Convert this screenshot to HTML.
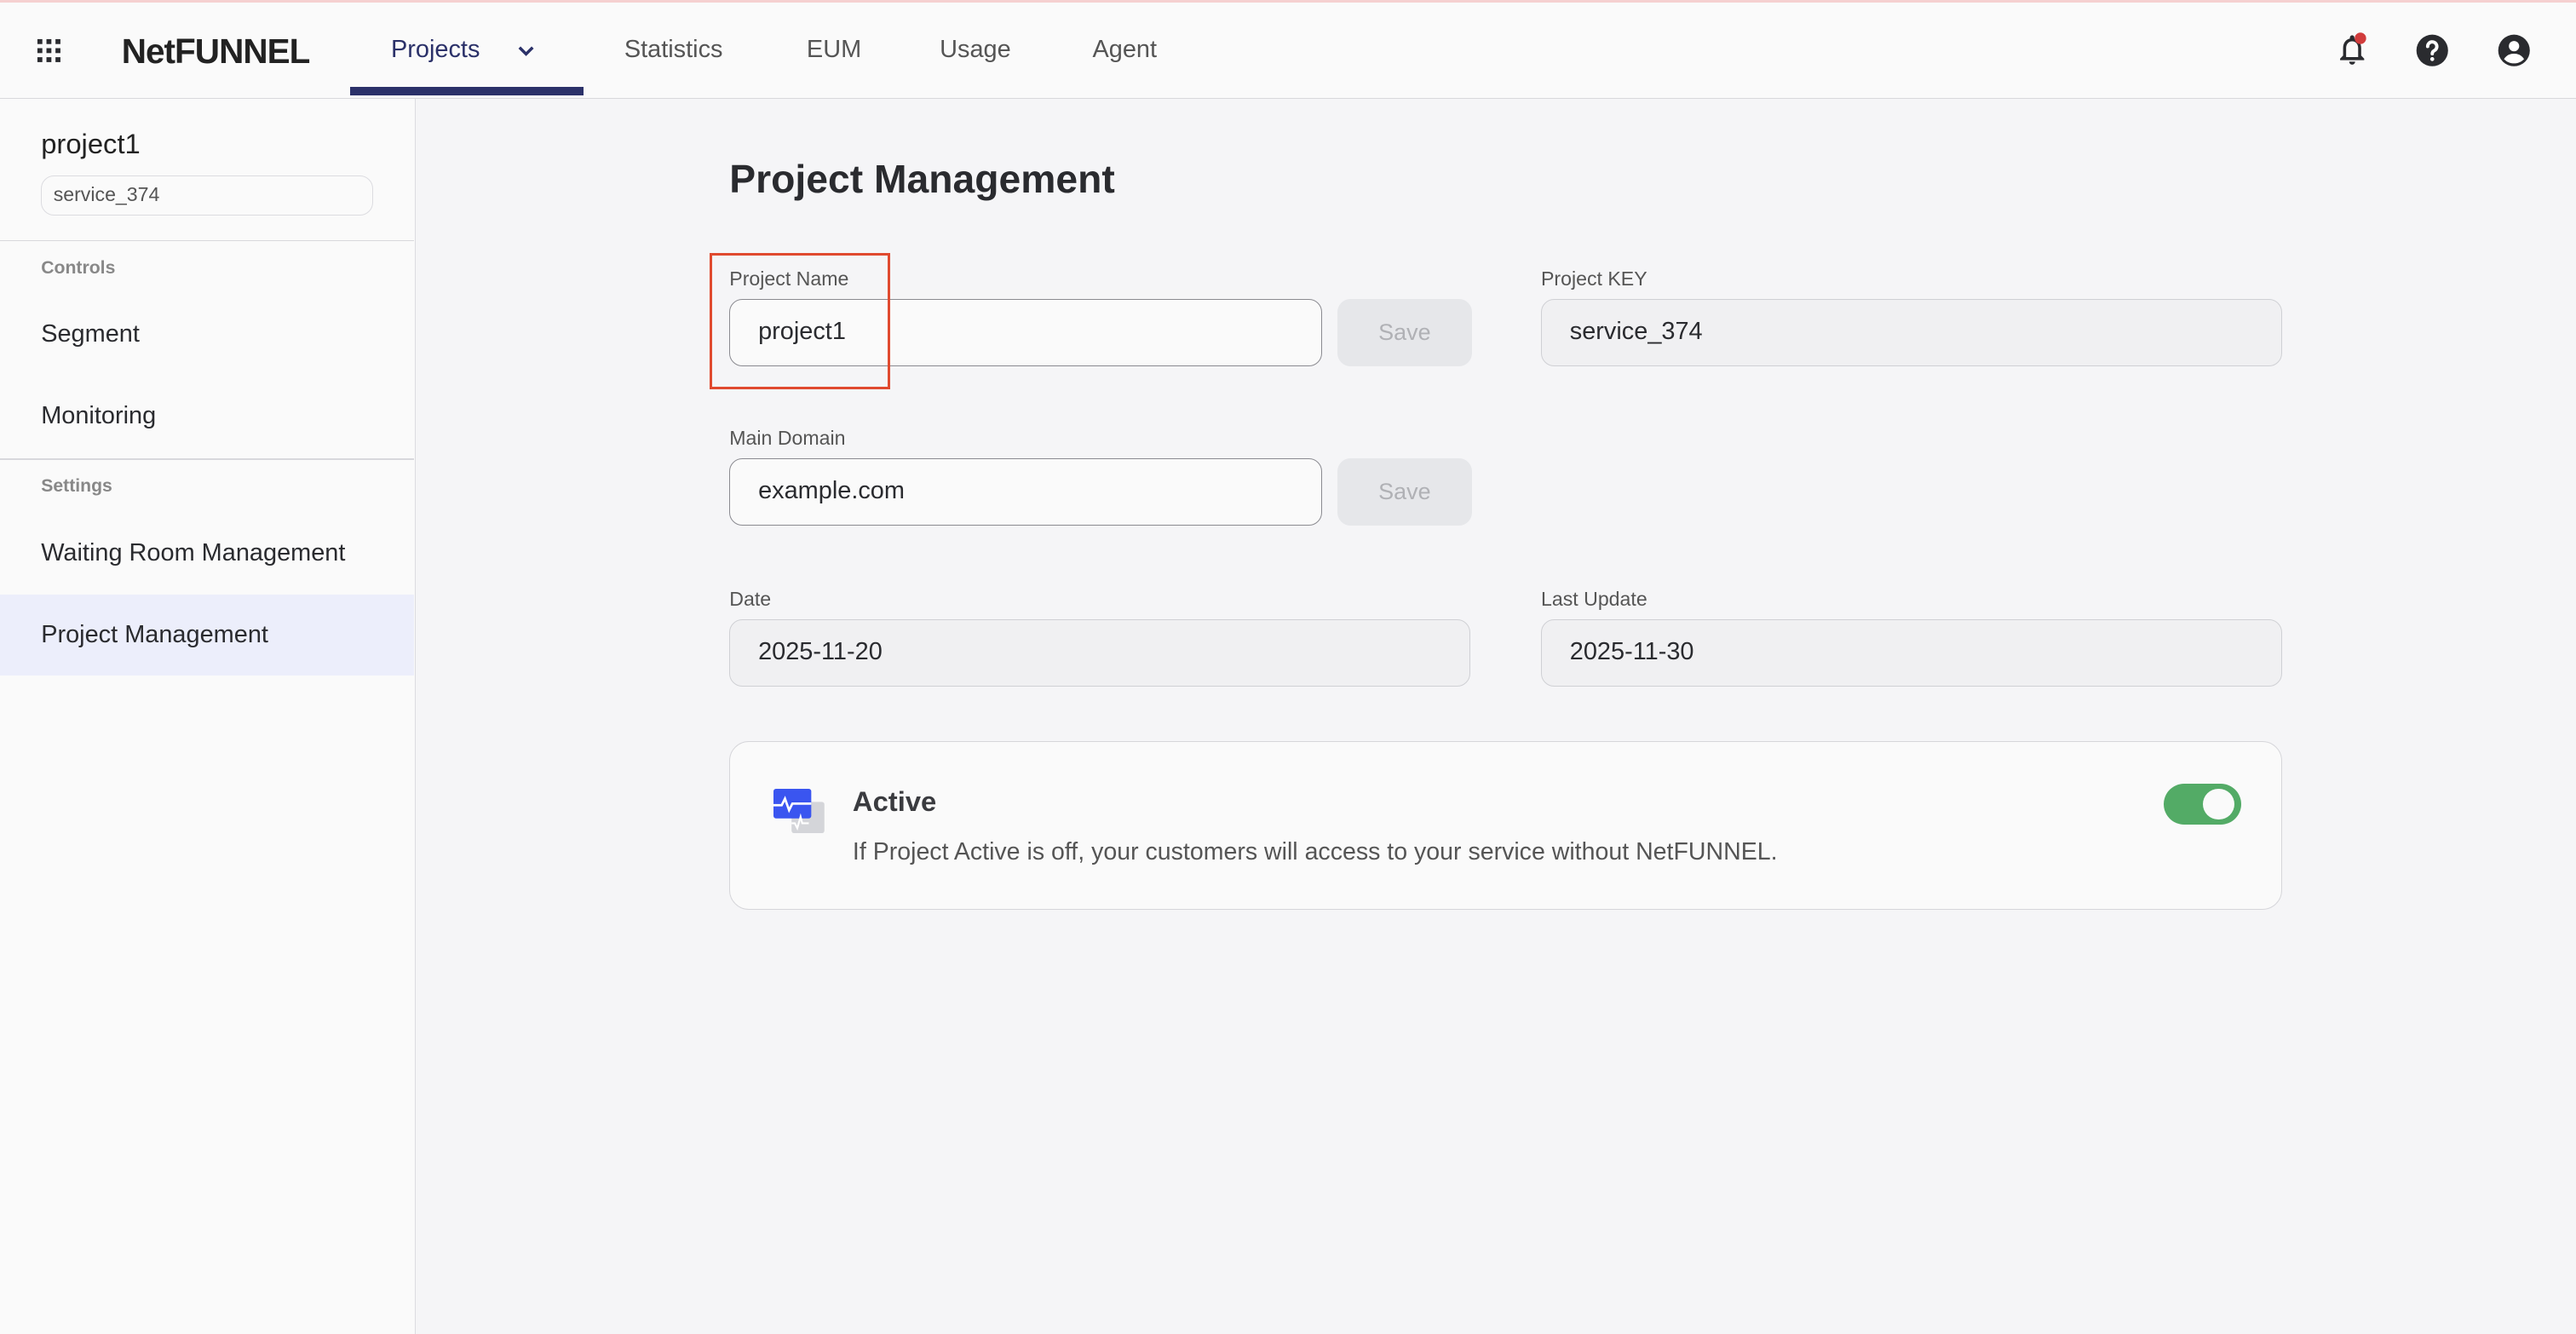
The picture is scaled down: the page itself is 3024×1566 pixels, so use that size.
<!DOCTYPE html>
<html><head><meta charset="utf-8"><style>
*{box-sizing:border-box;margin:0;padding:0}
html,body{width:3024px;height:1566px;overflow:hidden;background:#f5f5f7}
#w{zoom:1.92857;width:1568px;height:812px;position:relative;font-family:"Liberation Sans",Arial,sans-serif;color:#2a2b2f}
.a{position:absolute}
.hdr{left:0;top:0;width:1568px;height:60px;background:#fafafa;border-top:2px solid #f5d0d0;border-bottom:1px solid #d8d8dc}
.nav{font-size:15px;color:#555;top:22px}
.side{left:0;top:60px;width:253px;height:752px;background:#fafafa;border-right:1px solid #dcdce0}
.lbl{font-size:12px;color:#555}
.inp{height:41px;border-radius:8px;border:1px solid #8a8a90;background:#fafafa;font-size:15px;padding:0 17px;line-height:39px;color:#2a2b2f}
.dis{border-color:#cfd0d4;background:#f0f0f2}
.btn{height:41px;width:82px;border-radius:8px;background:#e6e7ea;color:#b0b1b5;font-size:14px;text-align:center;line-height:41px}
.si{left:25px;font-size:15px;color:#2a2b2f}
.sl{left:25px;font-size:11px;color:#888;font-weight:bold}
</style></head><body><div id="w">
<div class="a hdr"></div>
<svg class="a" style="left:22px;top:23px" width="16" height="16" viewBox="0 0 16 16" fill="#2a2b2f"><rect x="1" y="1" width="3" height="3"/><rect x="6.5" y="1" width="3" height="3"/><rect x="12" y="1" width="3" height="3"/><rect x="1" y="6.5" width="3" height="3"/><rect x="6.5" y="6.5" width="3" height="3"/><rect x="12" y="6.5" width="3" height="3"/><rect x="1" y="12" width="3" height="3"/><rect x="6.5" y="12" width="3" height="3"/><rect x="12" y="12" width="3" height="3"/></svg>
<div class="a" style="left:74px;top:19px;font-size:21px;font-weight:bold;letter-spacing:-0.5px;color:#222">NetFUNNEL</div>
<div class="a nav" style="left:238px;color:#2b3169">Projects</div>
<svg class="a" style="left:314px;top:25px" width="12" height="12" viewBox="0 0 12 12"><path d="M2 4l4 4 4-4" stroke="#2b3169" stroke-width="1.8" fill="none"/></svg>
<div class="a" style="left:213px;top:53px;width:142px;height:5px;background:#2b3169"></div>
<div class="a nav" style="left:380px">Statistics</div>
<div class="a nav" style="left:491px">EUM</div>
<div class="a nav" style="left:572px">Usage</div>
<div class="a nav" style="left:665px">Agent</div>
<svg class="a" style="left:1421px;top:19px" width="22" height="22" viewBox="0 0 24 24"><path d="M12 22a2 2 0 0 0 2-2h-4a2 2 0 0 0 2 2zm6-6v-5c0-3.1-1.6-5.6-4.5-6.3V4a1.5 1.5 0 0 0-3 0v.7C7.6 5.4 6 7.9 6 11v5l-2 2v1h16v-1l-2-2zm-2 1H8v-6c0-2.5 1.5-4.5 4-4.5s4 2 4 4.5v6z" fill="#2a2b2f"/><circle cx="17.5" cy="4.5" r="3.8" fill="#d13c3c"/></svg>
<svg class="a" style="left:1470px;top:20px" width="21" height="21" viewBox="0 0 24 24"><circle cx="12" cy="12" r="11" fill="#2a2b2f"/><path d="M8.8 9.2a3.2 3.2 0 1 1 4.6 2.9c-.9.5-1.4 1-1.4 2.2" stroke="#fff" stroke-width="2.3" fill="none" stroke-linecap="round"/><circle cx="12" cy="18" r="1.4" fill="#fff"/></svg>
<svg class="a" style="left:1520px;top:20px" width="21" height="21" viewBox="0 0 24 24"><circle cx="12" cy="12" r="11" fill="#2a2b2f"/><circle cx="12" cy="9" r="3.6" fill="#fff"/><path d="M5 18c2-3 4.5-3.8 7-3.8s5 .8 7 3.8c-2 2-4.3 3-7 3s-5-1-7-3z" fill="#fff"/></svg>
<div class="a side"></div>
<div class="a" style="left:25px;top:78px;font-size:17px;font-weight:500;color:#222">project1</div>
<div class="a" style="left:25px;top:107px;width:202px;height:24px;border:1px solid #dcdce0;border-radius:8px;font-size:12px;color:#555;padding-left:7px;line-height:22px">service_374</div>
<div class="a" style="left:0;top:146px;width:252px;height:1px;background:#d8d8dc"></div>
<div class="a sl" style="top:157px">Controls</div>
<div class="a si" style="top:195px">Segment</div>
<div class="a si" style="top:245px">Monitoring</div>
<div class="a" style="left:0;top:279px;width:252px;height:1px;background:#d8d8dc"></div>
<div class="a sl" style="top:290px">Settings</div>
<div class="a si" style="top:328px">Waiting Room Management</div>
<div class="a" style="left:0;top:362px;width:252px;height:49px;background:#eceefb"></div>
<div class="a si" style="top:378px">Project Management</div>
<div class="a" style="left:444px;top:95px;font-size:24px;font-weight:bold;color:#2a2b2f">Project Management</div>
<div class="a lbl" style="left:444px;top:163px">Project Name</div>
<div class="a inp" style="left:444px;top:182px;width:361px">project1</div>
<div class="a btn" style="left:814px;top:182px">Save</div>
<div class="a lbl" style="left:938px;top:163px">Project KEY</div>
<div class="a inp dis" style="left:938px;top:182px;width:451px">service_374</div>
<div class="a lbl" style="left:444px;top:260px">Main Domain</div>
<div class="a inp" style="left:444px;top:279px;width:361px">example.com</div>
<div class="a btn" style="left:814px;top:279px">Save</div>
<div class="a lbl" style="left:444px;top:358px">Date</div>
<div class="a inp dis" style="left:444px;top:377px;width:451px">2025-11-20</div>
<div class="a lbl" style="left:938px;top:358px">Last Update</div>
<div class="a inp dis" style="left:938px;top:377px;width:451px">2025-11-30</div>
<div class="a" style="left:444px;top:451px;width:945px;height:103px;border:1px solid #d6d6da;border-radius:12px;background:#fafafa"></div>
<svg class="a" style="left:471px;top:480px" width="32" height="28" viewBox="0 0 32 28"><rect x="11" y="8" width="20" height="19" rx="1.5" fill="#d4d5d9"/><rect x="0" y="0" width="23" height="18" rx="1.5" fill="#3a55f0"/><path d="M0 10h5l2-4 2.5 7 2-4h11.5" stroke="#fff" stroke-width="1.4" fill="none"/><path d="M11 21h2l1.5 3 2-7 1 4h4" stroke="#fff" stroke-width="1.1" fill="none"/></svg>
<div class="a" style="left:519px;top:478px;font-size:17px;font-weight:bold;color:#3a3b3f">Active</div>
<div class="a" style="left:519px;top:510px;font-size:14.8px;color:#555">If Project Active is off, your customers will access to your service without NetFUNNEL.</div>
<div class="a" style="left:1317px;top:477px;width:47px;height:25px;border-radius:13px;background:#53ab66"></div>
<div class="a" style="left:1341px;top:480px;width:19px;height:19px;border-radius:50%;background:#fafafa"></div>
<div class="a" style="left:432px;top:154px;width:110px;height:83px;border:2px solid #e04a2f"></div>
</div></body></html>
